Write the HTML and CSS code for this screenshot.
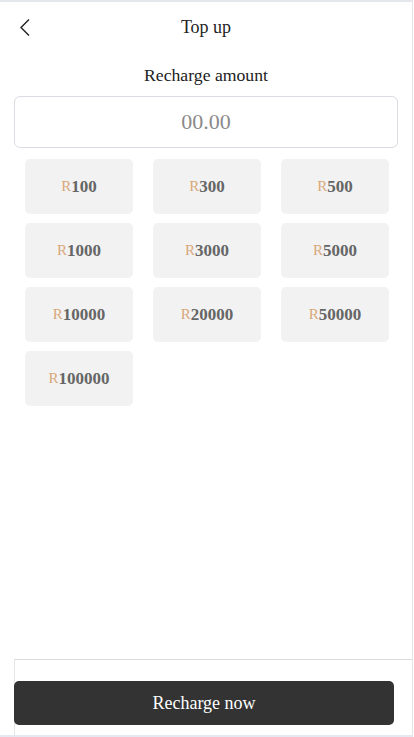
FILE: index.html
```html
<!DOCTYPE html>
<html>

<head>
    <meta charset="utf-8">
    <title>Top up</title>
    <link rel="stylesheet" href="styles.css">
</head>

<body>
    <div class="page">
        <div class="header">
            <a class="back" href="#">
                <svg width="12" height="19" viewBox="0 0 12 19">
                    <path d="M10 1.5 L2 9.5 L10 17.5" fill="none" stroke="#222" stroke-width="1.4" />
                </svg>
            </a>
            <div class="title">Top up</div>
            <div></div>
        </div>

        <div class="label">Recharge amount</div>
        <input class="amount" type="text" placeholder="00.00">

        <div class="chips">
            <div class="chip"><span class="cur">R</span>100</div>
            <div class="chip"><span class="cur">R</span>300</div>
            <div class="chip"><span class="cur">R</span>500</div>
            <div class="chip"><span class="cur">R</span>1000</div>
            <div class="chip"><span class="cur">R</span>3000</div>
            <div class="chip"><span class="cur">R</span>5000</div>
            <div class="chip"><span class="cur">R</span>10000</div>
            <div class="chip"><span class="cur">R</span>20000</div>
            <div class="chip"><span class="cur">R</span>50000</div>
            <div class="chip"><span class="cur">R</span>100000</div>
        </div>

        <div class="footer">
            <button class="submit">Recharge now</button>
        </div>
    </div>
</body>

</html>
```

FILE: styles.css
```css
/* page frame */
html,
body {
    margin: 0;
    padding: 0;
    background: #fff;
    font-family: "Liberation Serif", "Times New Roman", serif;
}

.page {
    box-sizing: border-box;
    width: 413px;
    height: 737px;
    border-top: 2px solid #e4e7ec;
    border-bottom: 2px solid #e4e9f2;
    border-right: 1px solid #e6e6e6;
    display: flex;
    flex-direction: column;
}

/* top bar */
.header {
    height: 50px;
    display: grid;
    grid-template-columns: 60px 1fr 60px;
    align-items: center;
}

.back {
    display: flex;
    padding-left: 19px;
    padding-top: 1px;
}

.title {
    text-align: center;
    font-size: 18px;
    color: #222;
}

/* amount input */
.label {
    margin-top: 10px;
    line-height: 24px;
    padding-top: 1px;
    text-align: center;
    font-size: 17.7px;
    color: #222;
}

.amount {
    box-sizing: border-box;
    display: block;
    margin: 9px 14px 0;
    width: 384px;
    height: 52px;
    border: 1px solid #d9dde3;
    border-radius: 6px;
    outline: none;
    text-align: center;
    font-family: inherit;
    font-size: 22px;
}

.amount::placeholder {
    color: #8a8a8a;
}

/* quick amounts */
.chips {
    margin: 11px 0 0 25px;
    width: 364px;
    display: grid;
    grid-template-columns: repeat(3, 1fr);
    grid-auto-rows: 55px;
    column-gap: 20px;
    row-gap: 9px;
}

.chip {
    background: #f2f2f2;
    border-radius: 5px;
    display: flex;
    justify-content: center;
    align-items: center;
    font-size: 17px;
    font-weight: bold;
    color: #666;
}

.cur {
    font-size: 15px;
    font-weight: normal;
    color: #d9a878;
}

/* bottom bar */
.footer {
    margin-top: auto;
    margin-left: 14px;
    border-top: 1px solid #dcdcdc;
    border-left: 1px solid #e6e6e6;
    padding: 21px 0 10px;
}

.submit {
    display: block;
    margin-left: -1px;
    width: 380px;
    height: 44px;
    background: #333;
    color: #fff;
    border: none;
    border-radius: 5px;
    font-family: inherit;
    font-size: 18px;
    cursor: pointer;
}
```
